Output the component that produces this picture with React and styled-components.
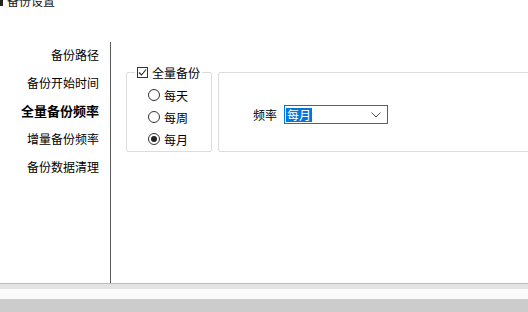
import styled, { createGlobalStyle } from "styled-components";

const Global = createGlobalStyle`
  html, body { margin: 0; padding: 0; background: #fff; }
  body { font-family: "Noto Sans CJK SC", "Microsoft YaHei", sans-serif; font-size: 12px; color: #000; }
`;

const Page = styled.div`
  width: 528px;
  height: 312px;
  display: flex;
  flex-direction: column;
  overflow: hidden;
  background: #fff;
`;

const Header = styled.div`
  height: 7px;
  display: flex;
  align-items: flex-end;
  gap: 4px;
  overflow: hidden;
`;

const HeaderIcon = styled.div`
  width: 3px;
  height: 6px;
  background: #222;
  align-self: flex-start;
`;

const HeaderTitle = styled.div`
  font-size: 12px;
  line-height: 12px;
  margin-bottom: 0;
  color: #111;
`;

const Body = styled.div`
  flex: 1;
  display: flex;
`;

const Nav = styled.div`
  width: 99px;
  padding-right: 11px;
  padding-top: 34px;
  display: flex;
  flex-direction: column;
  align-items: flex-end;
`;

const NavItem = styled.div`
  height: 28px;
  line-height: 28px;
  font-size: ${(p) => (p.$active ? 13 : 12)}px;
  font-weight: ${(p) => (p.$active ? 700 : 400)};
  white-space: nowrap;
`;

const Divider = styled.div`
  width: 1px;
  margin-top: 35px;
  background: #5a5a5a;
`;

const Content = styled.div`
  flex: 1;
  display: flex;
  align-items: flex-start;
  gap: 6px;
  padding-top: 65px;
  padding-left: 15px;
`;

const Group = styled.div`
  position: relative;
  box-sizing: border-box;
  height: 80px;
  border: 1px solid #dcdcdc;
  border-radius: 2px;
`;

const FirstGroup = styled(Group)`
  width: 86px;
  padding-top: 11px;
  padding-left: 21px;
  display: flex;
  flex-direction: column;
`;

const SecondGroup = styled(Group)`
  flex: 1;
  margin-right: -4px;
  padding-top: 32px;
  padding-left: 34px;
  display: flex;
  align-items: flex-start;
  gap: 7px;
`;

const GroupTitle = styled.label`
  position: absolute;
  top: -9px;
  left: 8px;
  display: flex;
  align-items: center;
  gap: 4px;
  padding: 0 2px;
  background: #fff;
  height: 16px;
`;

const Check = styled.span`
  width: 11px;
  height: 11px;
  box-sizing: border-box;
  border: 1px solid #333;
  display: flex;
  align-items: center;
  justify-content: center;
`;

const RadioRow = styled.div`
  height: 22px;
  display: flex;
  align-items: center;
  gap: 4px;
`;

const Radio = styled.span`
  width: 12px;
  height: 12px;
  box-sizing: border-box;
  border: 1px solid #333;
  border-radius: 50%;
  display: flex;
  align-items: center;
  justify-content: center;
  &::after {
    content: "";
    width: 6px;
    height: 6px;
    border-radius: 50%;
    background: ${(p) => (p.$on ? "#222" : "transparent")};
  }
`;

const Label = styled.span`
  line-height: 19px;
`;

const Combo = styled.div`
  width: 104px;
  height: 19px;
  box-sizing: border-box;
  border: 1px solid #0078d7;
  display: flex;
  align-items: center;
  padding: 0 6px 0 1px;
`;

const Selected = styled.span`
  background: #0078d7;
  color: #fff;
  line-height: 14px;
  height: 14px;
  padding: 0 1px;
`;

const Chevron = styled.svg`
  margin-left: auto;
`;

const Footer = styled.div`
  height: 29px;
  display: flex;
  flex-direction: column;
`;

const Band = styled.div`
  height: ${(p) => p.$h}px;
  background: ${(p) => p.$c};
`;

const navItems = ["备份路径", "备份开始时间", "全量备份频率", "增量备份频率", "备份数据清理"];
const radios = [
  { label: "每天", on: false },
  { label: "每周", on: false },
  { label: "每月", on: true },
];

export default function App() {
  return (
    <Page>
      <Global />
      <Header>
        <HeaderIcon />
        <HeaderTitle>备份设置</HeaderTitle>
      </Header>
      <Body>
        <Nav>
          {navItems.map((n, i) => (
            <NavItem key={n} $active={i === 2}>
              {n}
            </NavItem>
          ))}
        </Nav>
        <Divider />
        <Content>
          <FirstGroup>
            <GroupTitle>
              <Check>
                <svg width="9" height="9" viewBox="0 0 9 9">
                  <path d="M1 4.5 L3.5 7 L8 1.5" fill="none" stroke="#222" strokeWidth="1.1" />
                </svg>
              </Check>
              全量备份
            </GroupTitle>
            {radios.map((r) => (
              <RadioRow key={r.label}>
                <Radio $on={r.on} />
                {r.label}
              </RadioRow>
            ))}
          </FirstGroup>
          <SecondGroup>
            <Label>频率</Label>
            <Combo>
              <Selected>每月</Selected>
              <Chevron width="10" height="6" viewBox="0 0 10 6">
                <path d="M0.5 0.5 L5 5 L9.5 0.5" fill="none" stroke="#555" strokeWidth="1" />
              </Chevron>
            </Combo>
          </SecondGroup>
        </Content>
      </Body>
      <Footer>
        <Band $h={1} $c="#bdbdbd" />
        <Band $h={5} $c="#e3e3e3" />
        <Band $h={10} $c="#fbfbfb" />
        <Band $h={13} $c="#cccccc" />
      </Footer>
    </Page>
  );
}
